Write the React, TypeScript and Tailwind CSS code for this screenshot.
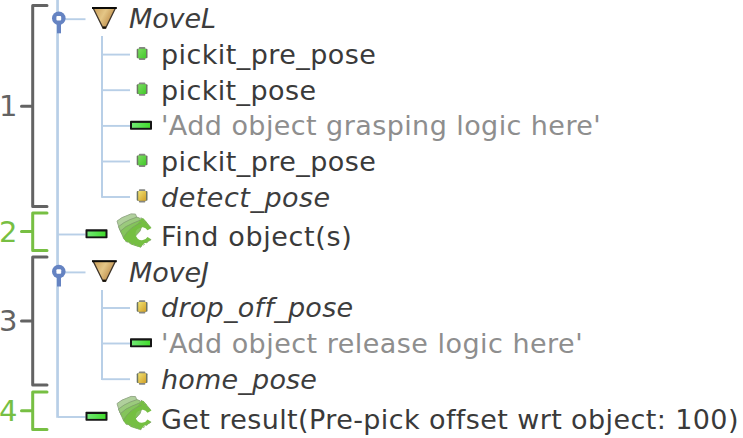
type Icon = 'move' | 'green' | 'yellow' | 'bar' | 'pickit';

interface Row {
  label: string;
  icon: Icon;
  top: number;
  height: number;
  line: number;
  branch?: 'middle' | 'end';
  last?: boolean;
  style: string;
}

const rows: Row[] = [
  { label: 'MoveL', icon: 'move', top: 0, height: 36, line: 19.2, style: 'text-[#3d3d3d] italic tracking-[-0.1px]' },
  { label: 'pickit_pre_pose', icon: 'green', top: 36, height: 36, line: 54.6, branch: 'middle', style: 'text-[#3a3a3a] tracking-[0.43px]' },
  { label: 'pickit_pose', icon: 'green', top: 72, height: 36, line: 90.2, branch: 'middle', style: 'text-[#3a3a3a] tracking-[0.4px]' },
  { label: "'Add object grasping logic here'", icon: 'bar', top: 108, height: 35, line: 125.9, branch: 'middle', style: 'text-[#8e8e8e] tracking-[0.42px]' },
  { label: 'pickit_pre_pose', icon: 'green', top: 143, height: 36, line: 161.5, branch: 'middle', style: 'text-[#3a3a3a] tracking-[0.43px]' },
  { label: 'detect_pose', icon: 'yellow', top: 179, height: 36, line: 197, branch: 'end', style: 'text-[#3d3d3d] italic tracking-[0.5px]' },
  { label: 'Find object(s)', icon: 'pickit', top: 215, height: 39, line: 234.5, style: 'text-[#3a3a3a] tracking-[0.66px]' },
  { label: 'MoveJ', icon: 'move', top: 254, height: 36, line: 272.4, style: 'text-[#3d3d3d] italic tracking-[-0.1px]' },
  { label: 'drop_off_pose', icon: 'yellow', top: 290, height: 35, line: 308, branch: 'middle', style: 'text-[#3d3d3d] italic tracking-[0.28px]' },
  { label: "'Add object release logic here'", icon: 'bar', top: 325, height: 36, line: 343.5, branch: 'middle', style: 'text-[#8e8e8e] tracking-[0.47px]' },
  { label: 'home_pose', icon: 'yellow', top: 361, height: 36, line: 379.2, branch: 'end', style: 'text-[#3d3d3d] italic tracking-[0.2px]' },
  { label: 'Get result(Pre-pick offset wrt object: 100)', icon: 'pickit', top: 397, height: 40, line: 417, last: true, style: 'text-[#3a3a3a] tracking-[0.4px]' },
];

function Bar({ x, y }: { x: number; y: number }) {
  return (
    <g>
      <rect x={x} y={y} width="22" height="9" rx="0.7" fill="#151515" />
      <rect x={x + 2} y={y + 2.2} width="18" height="4.9" fill="url(#barFill)" />
    </g>
  );
}

function Dot({ y, fill }: { y: number; fill: string }) {
  return (
    <g transform={`translate(136.5 ${y - 7.5})`}>
      <rect x="2.4" y="0" width="6.4" height="13.2" rx="0.8" fill="#858782" />
      <rect x="0.2" y="1.8" width="10.8" height="9.6" rx="1" fill="#6c7563" />
      <rect x="1.7" y="1.8" width="7.8" height="9.6" rx="0.6" fill={fill} />
    </g>
  );
}

function Knob({ y }: { y: number }) {
  return (
    <g>
      <rect x="57" y={y} width="4" height="15" fill="#6583c2" />
      <circle cx="58.8" cy={y} r="6.8" fill="#6583c2" />
      <rect x="56.4" y={y - 2.3} width="4.8" height="4.6" rx="1" fill="#fff" />
    </g>
  );
}

function Funnel({ y }: { y: number }) {
  return (
    <g transform={`translate(92 ${y})`}>
      <path d="M1.2 1.2H23.4L13.7 21H11Z" fill="url(#tan)" stroke="#3e352a" strokeWidth="1.3" />
      <path d="M0 1H24.8" stroke="#0c0b08" strokeWidth="2" />
      <path d="M10.7 20.5H13.9" stroke="#17120a" strokeWidth="2.2" />
    </g>
  );
}

function Pickit({ y }: { y: number }) {
  return (
    <g transform={`translate(116 ${y})`} strokeLinejoin="round">
      <path d="M1 8 6 4.5 11 2.5 15 .8 19.5 1 21 5 16 14 4 17.5Z" fill="#b0d09c" stroke="#98ac8b" strokeWidth="1" />
      <path d="M2.5 13.5 8 9.5 14 6.5 21 4 24.5 5.5 22 14 10 22 5.5 20Z" fill="#9bca7d" stroke="#88a377" strokeWidth="0.9" />
      <path d="M4.5 18 10 13.5 16 10.5 24 7.2 27.5 8 24 18 14 29 8 26Z" fill="#84c45b" stroke="#7fa069" strokeWidth="0.9" />
      <path d="M7.5 24.5 11 19.5 15.5 15.5 21 12 25 10 27 5.5 31 9.5 35.5 15 31.5 17.2A6.5 6.5 0 1 0 31.5 24L35.5 26.5 30.5 30 28.5 30 24.5 34.3 19.5 32.8 15 31.5 12.5 29.5 9.5 28.5Z" fill="#75bf42" />
      <path d="M22 10.5 25.5 5 27.5 5.5 31 9.5 26 14 18 17 13 21Z" fill="#75bf42" />
      <path d="M7.5 24.5 11 19.5 15.5 15 21 11.5 25.5 9.5" fill="none" stroke="#79a45c" strokeWidth="0.9" />
      <path d="M25 4.3 35.3 15M35 26.5 24.5 34 9 28" fill="none" stroke="#8da47d" strokeWidth="1" strokeDasharray="2 1.8" />
    </g>
  );
}

function Gutter({ row }: { row: Row }) {
  const { icon, line, top, height, branch, last } = row;
  const bottom = top + height;
  const width = icon === 'move' ? 81 : 113;
  return (
    <svg className="block shrink-0 overflow-visible" width={width} height={height} viewBox={`48 ${top} ${width} ${height}`}>
      <rect x="56.2" y={top} width="2.7" height={(last ? line + 0.8 : bottom) - top} fill="#b8cfe7" />
      {branch && (
        <>
          <rect x="101" y={top} width="2" height={(branch === 'end' ? line + 0.8 : bottom) - top} fill="#b8cfe7" />
          <path d={`M102 ${line}H130`} stroke="#b8cfe7" strokeWidth="1.9" />
        </>
      )}
      {!branch && <path d={`M58 ${line}H85.5`} stroke="#b8cfe7" strokeWidth="1.9" />}
      {icon === 'move' && (
        <>
          <Knob y={line - 0.9} />
          <Funnel y={line - 12.2} />
        </>
      )}
      {icon === 'green' && <Dot y={line - 0.2} fill="url(#greenDot)" />}
      {icon === 'yellow' && <Dot y={line - 0.2} fill="url(#yellowDot)" />}
      {icon === 'bar' && <Bar x={130} y={line - 5.2} />}
      {icon === 'pickit' && (
        <>
          <Bar x={85.5} y={line - 5.2} />
          <Pickit y={line - 21.4} />
        </>
      )}
    </svg>
  );
}

interface Step {
  n: number;
  height: number;
  from: number;
  to: number;
  tick: number;
  look: string;
}

const steps: Step[] = [
  { n: 1, height: 209, from: 5.4, to: 206.6, tick: 106.2, look: 'text-[#636363] pt-[89px]' },
  { n: 2, height: 45, from: 3.9, to: 41.4, tick: 22.6, look: 'text-[#77bf43] pt-[6px]' },
  { n: 3, height: 134, from: 3, to: 131, tick: 67, look: 'text-[#636363] pt-[50px]' },
  { n: 4, height: 50, from: 4, to: 41.4, tick: 22.8, look: 'text-[#77bf43] pt-[6px]' },
];

export default function App() {
  return (
    <main className="flex h-[438px] w-[743px] overflow-hidden bg-white font-['DejaVu_Sans',sans-serif]">
      <svg className="absolute h-0 w-0">
        <defs>
          <linearGradient id="barFill"><stop stopColor="#70e874" /><stop offset="1" stopColor="#42dc2c" /></linearGradient>
          <linearGradient id="greenDot" x2="1" y2="1"><stop stopColor="#7bdc60" /><stop offset="1" stopColor="#43c92b" /></linearGradient>
          <linearGradient id="yellowDot" x2="1" y2="1"><stop stopColor="#f0e272" /><stop offset="1" stopColor="#d2a028" /></linearGradient>
          <linearGradient id="tan" x2="1" y2=".5"><stop stopColor="#c99c58" /><stop offset=".5" stopColor="#e4c686" /><stop offset="1" stopColor="#b98542" /></linearGradient>
        </defs>
      </svg>
      <aside className="w-12 shrink-0">
        {steps.map((s) => (
          <div key={s.n} className={`flex items-start ${s.look}`} style={{ height: s.height }}>
            <span className="w-5 shrink-0 text-[29px] leading-[34px] tracking-[-1px] -indent-px">{s.n}</span>
            <svg className="block shrink-0 overflow-visible" width="28" height="34" viewBox={`20 ${s.n === 1 ? 89 : s.n === 3 ? 50 : 6} 28 34`}>
              <path
                d={`M47 ${s.from}H32.7V${s.to}H47M21.5 ${s.tick}H32`}
                fill="none"
                stroke="currentColor"
                strokeWidth="3"
                strokeLinecap="round"
                strokeLinejoin="round"
              />
            </svg>
          </div>
        ))}
      </aside>
      <section className="min-w-0 grow">
        {rows.map((row) => (
          <div key={row.top} className="flex items-end" style={{ height: row.height }}>
            <Gutter row={row} />
            <span className={`pt-[2px] text-[27px] leading-[34px] whitespace-pre ${row.style}`}>{row.label}</span>
          </div>
        ))}
      </section>
    </main>
  );
}
